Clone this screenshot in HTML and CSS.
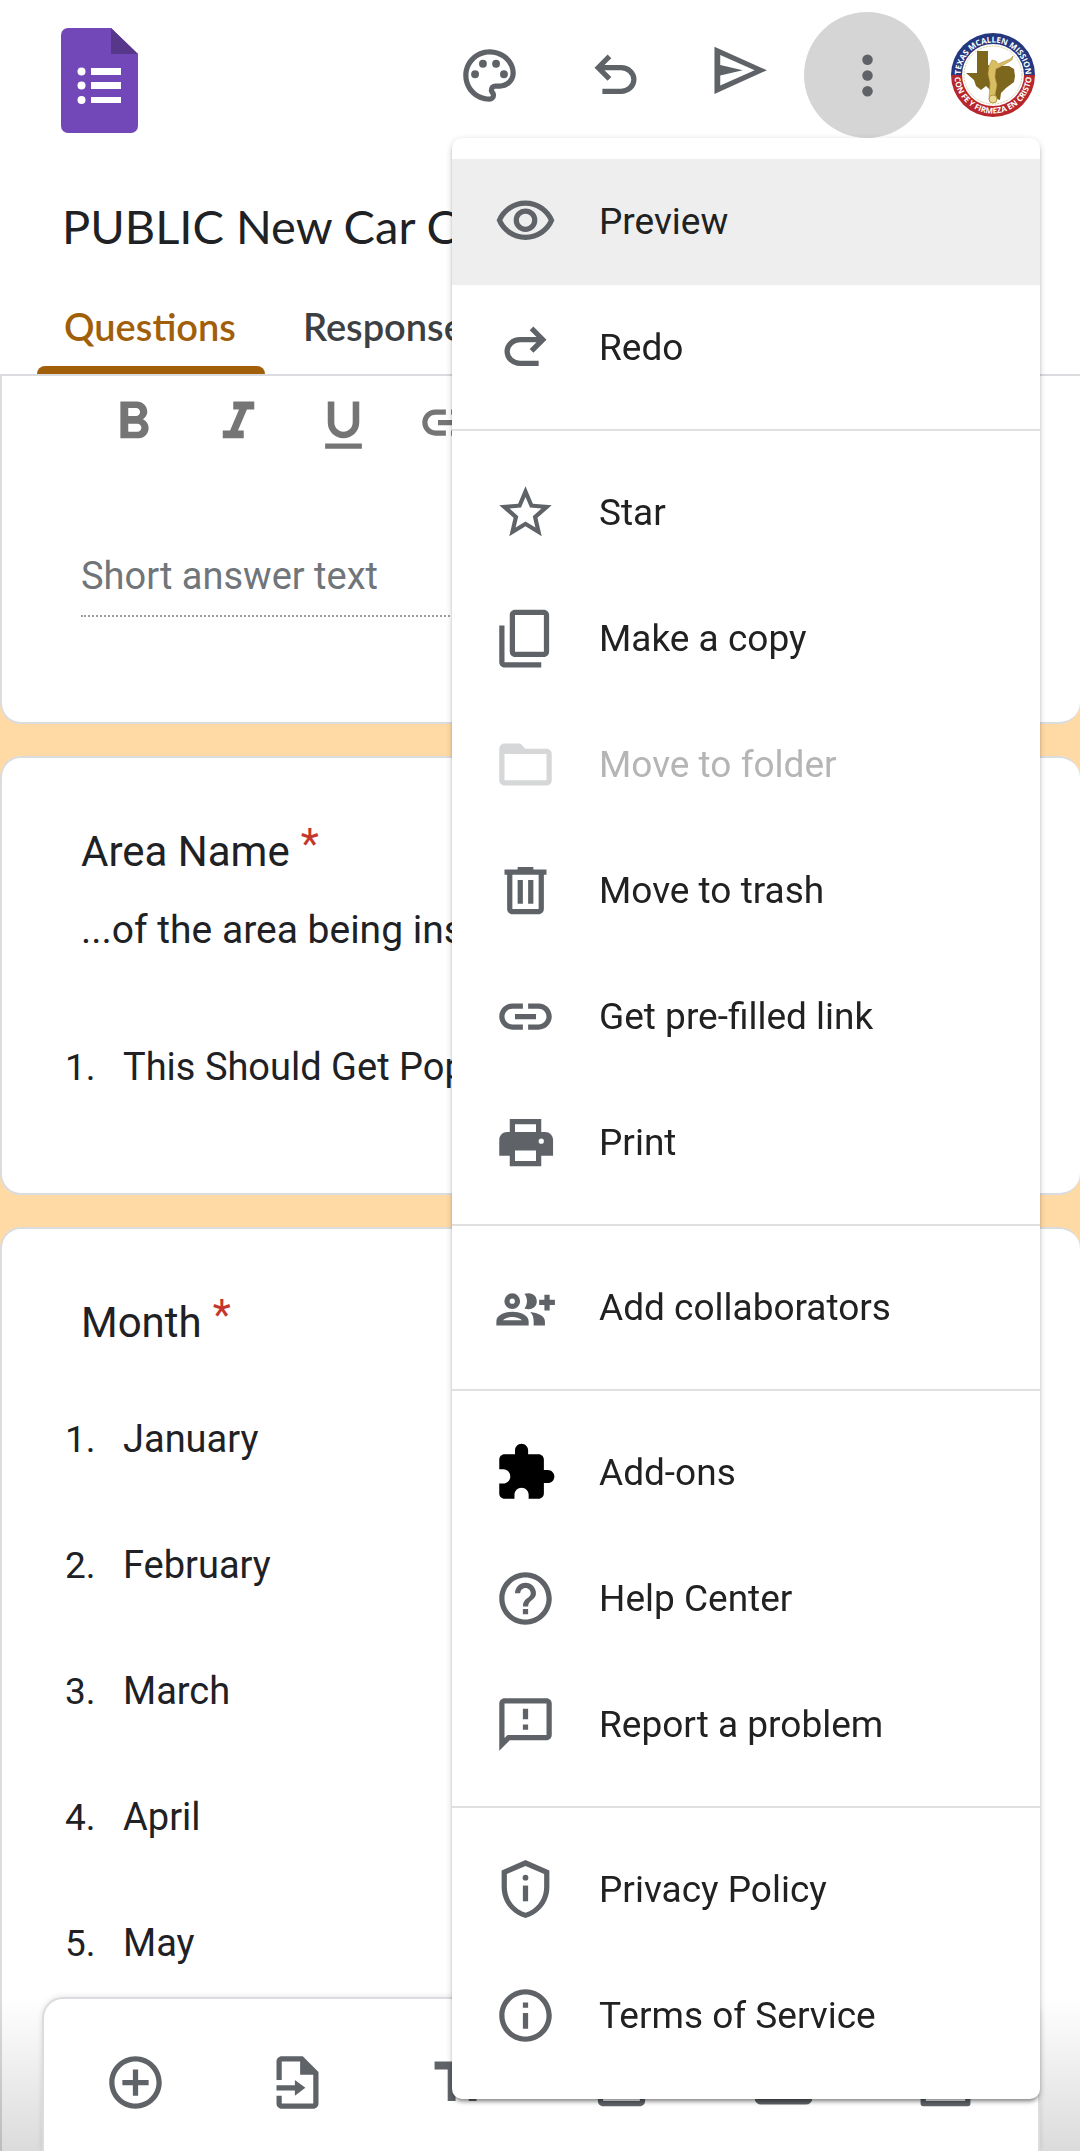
FILE: index.html
```html
<!DOCTYPE html>
<html lang="en">
<head>
<meta charset="utf-8">
<meta name="viewport" content="width=device-width, initial-scale=1">
<title>PUBLIC New Car C</title>
<link rel="stylesheet" href="styles.css">
</head>
<body>
<div class="app">
  <header class="header">
    <div class="appbar">
      <a class="logo" href="#" aria-label="Forms home">
        <svg viewBox="0 0 77 105" width="77" height="105"><path fill="#7248b9" d="M7 0h43l27 26v72a7 7 0 0 1-7 7H7a7 7 0 0 1-7-7V7a7 7 0 0 1 7-7z"/><path fill="#563789" d="M50 0v26h27z"/><g fill="#fff"><circle cx="20.500" cy="43.500" r="4"/><circle cx="20.500" cy="57.500" r="4"/><circle cx="20.500" cy="72" r="4"/><path d="M30 40h30v7H30zM30 54h30v7H30zM30 69h30v6H30z"/></g></svg>
      </a>
      <div class="actions">
        <button class="icon-button" type="button" aria-label="Customize theme"><svg class="icon" viewBox="0 0 24 24"><path d="M12 22C6.490 22 2 17.510 2 12S6.490 2 12 2s10 4.040 10 9c0 3.310-2.690 6-6 6h-1.770c-.28 0-.5.22-.5.5 0 .12.05.23.13.33.41.47.64 1.060.64 1.670A2.500 2.500 0 0 1 12 22zm0-18c-4.410 0-8 3.590-8 8s3.590 8 8 8c.28 0 .5-.22.5-.5a.54.54 0 0 0-.14-.35c-.41-.46-.63-1.050-.63-1.650a2.500 2.500 0 0 1 2.500-2.500H16c2.210 0 4-1.790 4-4 0-3.860-3.590-7-8-7z"/><circle cx="6.500" cy="11.500" r="1.500"/><circle cx="9.500" cy="7.500" r="1.500"/><circle cx="14.500" cy="7.500" r="1.500"/><circle cx="17.500" cy="11.500" r="1.500"/></svg></button>
        <button class="icon-button" type="button" aria-label="Undo"><svg class="icon" viewBox="0 0 24 24"><path d="M7 19v-2h7.100q1.575 0 2.737-1T18 13.500 16.837 11 14.100 10H7.800l2.600 2.600L9 14 4 9l5-5 1.400 1.400L7.800 8h6.300q2.425 0 4.163 1.575T20 13.500t-1.737 3.925T14.100 19z"/></svg></button>
        <button class="icon-button" type="button" aria-label="Send"><svg class="icon" viewBox="0 0 24 24"><path fill-rule="evenodd" d="M1.700 1v18l20-9zM3.900 4.200 17 10 3.900 15.800V12L12.500 10 3.900 8z"/></svg></button>
        <button class="icon-button icon-button-active" type="button" aria-label="More" aria-expanded="true"><svg class="icon" viewBox="0 0 24 24"><circle cx="12" cy="6" r="2"/><circle cx="12" cy="12" r="2"/><circle cx="12" cy="18" r="2"/></svg></button>
        <button class="avatar" type="button" aria-label="Account">
          <svg viewBox="0 0 84 84" width="84" height="84">
            <defs><path id="arc-top" d="M9.500 42a32.500 32.500 0 0 1 65 0"/><path id="arc-bottom" d="M3.500 42a38.500 38.500 0 0 0 77 0"/></defs>
            <path fill="#25387f" d="M0 42a42 42 0 0 1 84 0z"/><path fill="#b7262b" d="M0 42a42 42 0 0 0 84 0z"/>
            <circle cx="42" cy="42" r="31" fill="#fff"/><circle cx="42" cy="42" r="29" fill="none" stroke="#d9cf9a" stroke-width="1" stroke-dasharray="2 1"/>
            <path fill="#7d671d" d="M26 18h11v14l6 2 7-1 8 0 5 3 1 7-1 6-8 6-5 5-1 7-6-2-4-8-4-4-5 4-5-4-2-6-8-7h11z"/>
            <path fill="#d8bd63" stroke="#a8872f" stroke-width=".5" d="M41 27l4 1 2 3 12-5 3-3-1 4-12 7-4 2-1 8 2 8-2 11h-3l-1 3h-2l1-16-2-9 1-8z"/><circle cx="42" cy="66" r="4" fill="#ead995" stroke="#b3943c"/>
            <text class="seal-text"><textPath href="#arc-top" startOffset="50%">TEXAS MCALLEN MISSION</textPath></text>
            <text class="seal-text"><textPath href="#arc-bottom" startOffset="50%">CON FE Y FIRMEZA EN CRISTO</textPath></text>
          </svg>
        </button>
      </div>
    </div>
    <h1 class="title">PUBLIC New Car C</h1>
    <nav class="tabs">
      <a class="tab tab-active" href="#questions">Questions</a>
      <a class="tab" href="#responses">Responses</a>
    </nav>

    <div class="menu" role="menu">
      <button class="menu-item menu-item-focus" type="button" role="menuitem"><svg class="icon" viewBox="0 0 24 24"><path d="M12 6c3.790 0 7.170 2.130 8.820 5.500C19.170 14.870 15.790 17 12 17s-7.170-2.130-8.820-5.500C4.830 8.130 8.210 6 12 6m0-2C7 4 2.730 7.110 1 11.500 2.730 15.890 7 19 12 19s9.270-3.110 11-7.500C21.270 7.110 17 4 12 4z"/><circle cx="12" cy="11.500" r="3.500" fill="none" stroke="currentColor" stroke-width="2"/></svg>Preview</button>
      <button class="menu-item" type="button" role="menuitem"><svg class="icon" viewBox="0 0 24 24"><path transform="matrix(-1 0 0 1 24 0)" d="M7 19v-2h7.100q1.575 0 2.737-1T18 13.500 16.837 11 14.100 10H7.800l2.600 2.600L9 14 4 9l5-5 1.400 1.400L7.800 8h6.300q2.425 0 4.163 1.575T20 13.500t-1.737 3.925T14.100 19z"/></svg>Redo</button>
      <hr class="menu-divider">
      <button class="menu-item" type="button" role="menuitem"><svg class="icon" viewBox="0 0 24 24"><path d="M22 9.240l-7.190-.62L12 2 9.190 8.630 2 9.240l5.460 4.730L5.820 21 12 17.270 18.180 21l-1.630-7.030L22 9.240zM12 15.400l-3.760 2.270 1-4.280-3.320-2.880 4.380-.38L12 6.100l1.710 4.040 4.380.38-3.320 2.880 1 4.280L12 15.400z"/></svg>Star</button>
      <button class="menu-item" type="button" role="menuitem"><svg class="icon" viewBox="0 0 24 24"><path d="M19 1H8c-1.100 0-2 .9-2 2v14c0 1.100.9 2 2 2h11c1.100 0 2-.9 2-2V3c0-1.100-.9-2-2-2zm0 16H8V3h11zM4 7H2v14c0 1.100.9 2 2 2h14v-2H4z"/></svg>Make a copy</button>
      <button class="menu-item" type="button" role="menuitem" disabled><svg class="icon" viewBox="0 0 24 24"><path d="M20 6h-8l-2-2H4c-1.100 0-1.990.9-1.990 2L2 18c0 1.100.9 2 2 2h16c1.100 0 2-.9 2-2V8c0-1.100-.9-2-2-2zm0 12H4V8h16v10z"/></svg>Move to folder</button>
      <button class="menu-item" type="button" role="menuitem"><svg class="icon" viewBox="0 0 24 24"><path d="M15 4V3H9v1H4v2h1v13c0 1.100.9 2 2 2h10c1.100 0 2-.9 2-2V6h1V4h-5zm2 15H7V6h10v13zM9 8h2v9H9zm4 0h2v9h-2z"/></svg>Move to trash</button>
      <button class="menu-item" type="button" role="menuitem"><svg class="icon" viewBox="0 0 24 24"><path d="M17 7h-4v2h4c1.650 0 3 1.350 3 3s-1.350 3-3 3h-4v2h4c2.760 0 5-2.240 5-5s-2.240-5-5-5zm-6 8H7c-1.650 0-3-1.350-3-3s1.350-3 3-3h4V7H7c-2.760 0-5 2.240-5 5s2.240 5 5 5h4v-2zm-3-4h8v2H8z"/></svg>Get pre-filled link</button>
      <button class="menu-item" type="button" role="menuitem"><svg class="icon" viewBox="0 0 24 24"><path fill-rule="evenodd" d="M19.500 8H18V3H6v5H5c-1.660 0-3 1.340-3 3v6h4v4h12v-4h4.500v-6c0-1.660-1.340-3-3-3zM8 5h8v3H8V5zm8 14H8v-4h8v4zm2-8.500a1 1 0 1 1 0 2 1 1 0 0 1 0-2z"/></svg>Print</button>
      <hr class="menu-divider">
      <button class="menu-item" type="button" role="menuitem"><svg class="icon" viewBox="0 0 24 24"><circle cx="6.950" cy="9.600" r="2" fill="none" stroke="currentColor" stroke-width="2"/><path fill-rule="evenodd" d="M.9 18.900v-1.700c0-2.400 3.500-3.600 6.100-3.600s6.200 1.200 6.200 3.600v1.700zM3.400 16.900h7.300c-.7-.7-2.200-1.300-3.700-1.300s-3 .6-3.600 1.300zM11.600 6.800c3-.9 4.700.8 4.700 2.800s-1.700 3.700-4.700 2.800c1.300-1.600 1.300-4 0-5.600zM13.800 13.700c3 .3 5.600 1.500 5.600 3.600v1.600h-4.300v-1.700c0-1.500-.4-2.600-1.300-3.500zM19.200 7.100h2V9h2v2h-2v2.100h-2V11h-2V9h2z"/></svg>Add collaborators</button>
      <hr class="menu-divider">
      <button class="menu-item" type="button" role="menuitem"><svg class="icon icon-black" viewBox="0 0 24 24"><path d="M20.500 11H19V7c0-1.100-.9-2-2-2h-4V3.500C13 2.120 11.880 1 10.500 1S8 2.120 8 3.500V5H4c-1.100 0-1.990.9-1.990 2v3.800H3.500c1.490 0 2.700 1.210 2.700 2.700s-1.210 2.700-2.700 2.700H2V20c0 1.100.9 2 2 2h3.800v-1.500c0-1.490 1.210-2.700 2.700-2.700 1.490 0 2.700 1.210 2.700 2.700V22H17c1.100 0 2-.9 2-2v-4h1.500c1.380 0 2.500-1.120 2.500-2.500S21.880 11 20.500 11z"/></svg>Add-ons</button>
      <button class="menu-item" type="button" role="menuitem"><svg class="icon" viewBox="0 0 24 24"><path d="M11 18h2v-2h-2v2zm1-16C6.480 2 2 6.480 2 12s4.480 10 10 10 10-4.480 10-10S17.520 2 12 2zm0 18c-4.410 0-8-3.590-8-8s3.590-8 8-8 8 3.590 8 8-3.590 8-8 8zm0-14c-2.210 0-4 1.790-4 4h2c0-1.100.9-2 2-2s2 .9 2 2c0 2-3 1.750-3 5h2c0-2.250 3-2.500 3-5 0-2.210-1.790-4-4-4z"/></svg>Help Center</button>
      <button class="menu-item" type="button" role="menuitem"><svg class="icon" viewBox="0 0 24 24"><path d="M20 2H4c-1.100 0-1.990.9-1.990 2L2 22l4-4h14c1.100 0 2-.9 2-2V4c0-1.100-.9-2-2-2zm0 14H5.170l-.59.59-.58.58V4h16v12zm-9-4h2v2h-2zm0-6h2v4h-2z"/></svg>Report a problem</button>
      <hr class="menu-divider">
      <button class="menu-item" type="button" role="menuitem"><svg class="icon" viewBox="0 0 24 24"><path fill-rule="evenodd" d="M12 .8 2.900 4.800V11c0 5.600 3.700 10.200 9.100 11.900 5.400-1.700 9.100-6.300 9.100-11.900V4.800zm0 2.200 7.100 3.100V11c0 4.600-2.800 8.300-7.100 9.900-4.300-1.600-7.100-5.300-7.100-9.900V6.100z"/><circle cx="12" cy="7.500" r="1.100"/><path d="M11 10.500h2v6h-2z"/></svg>Privacy Policy</button>
      <button class="menu-item" type="button" role="menuitem"><svg class="icon" viewBox="0 0 24 24"><path d="M11 7h2v2h-2zm0 4h2v6h-2zm1-9C6.480 2 2 6.480 2 12s4.480 10 10 10 10-4.480 10-10S17.520 2 12 2zm0 18c-4.410 0-8-3.590-8-8s3.590-8 8-8 8 3.590 8 8-3.590 8-8 8z"/></svg>Terms of Service</button>
    </div>
  </header>

  <main class="content">
    <section class="card card-first">
      <div class="format-bar">
        <button class="format-button" type="button" aria-label="Bold"><svg class="icon" viewBox="0 0 24 24"><path d="M15.600 10.790c.97-.67 1.650-1.770 1.650-2.790 0-2.260-1.750-4-4-4H7v14h7.040c2.090 0 3.710-1.700 3.710-3.790 0-1.520-.86-2.820-2.150-3.420zM10 6.500h3c.83 0 1.500.67 1.500 1.500s-.67 1.500-1.500 1.500h-3v-3zm3.500 9H10v-3h3.500c.83 0 1.500.67 1.500 1.500s-.67 1.500-1.500 1.500z"/></svg></button>
        <button class="format-button" type="button" aria-label="Italic"><svg class="icon" viewBox="0 0 24 24"><path d="M10 4v3h2.210l-3.420 8H6v3h8v-3h-2.210l3.420-8H18V4z"/></svg></button>
        <button class="format-button" type="button" aria-label="Underline"><svg class="icon" viewBox="0 0 24 24"><path d="M12 18c3.310 0 6-2.690 6-6V4h-2.500v8c0 1.930-1.570 3.500-3.500 3.500S8.500 13.930 8.500 12V4H6v8c0 3.310 2.690 6 6 6zm-7 2v2h14v-2H5z"/></svg></button>
        <button class="format-button" type="button" aria-label="Insert link"><svg class="icon" viewBox="0 0 24 24"><path d="M17 7h-4v2h4c1.650 0 3 1.350 3 3s-1.350 3-3 3h-4v2h4c2.760 0 5-2.240 5-5s-2.240-5-5-5zm-6 8H7c-1.650 0-3-1.350-3-3s1.350-3 3-3h4V7H7c-2.760 0-5 2.240-5 5s2.240 5 5 5h4v-2zm-3-4h8v2H8z"/></svg></button>
      </div>
      <input class="answer" type="text" placeholder="Short answer text" aria-label="Short answer text">
    </section>

    <section class="card">
      <h2 class="question">Area Name<span class="required">*</span></h2>
      <p class="description">...of the area being ins</p>
      <ol class="options">
        <li class="option"><span class="number">1.</span>This Should Get Pop</li>
      </ol>
    </section>

    <section class="card card-last">
      <h2 class="question">Month<span class="required">*</span></h2>
      <ol class="options options-month">
        <li class="option"><span class="number">1.</span>January</li>
        <li class="option"><span class="number">2.</span>February</li>
        <li class="option"><span class="number">3.</span>March</li>
        <li class="option"><span class="number">4.</span>April</li>
        <li class="option"><span class="number">5.</span>May</li>
      </ol>
    </section>
  </main>

  <footer class="dock">
    <div class="toolbar">
      <button class="tool" type="button" aria-label="Add question"><svg class="icon" viewBox="0 0 24 24"><path d="M13 7h-2v4H7v2h4v4h2v-4h4v-2h-4V7zm-1-5C6.480 2 2 6.480 2 12s4.480 10 10 10 10-4.480 10-10S17.520 2 12 2zm0 18c-4.410 0-8-3.590-8-8s3.590-8 8-8 8 3.590 8 8-3.590 8-8 8z"/></svg></button>
      <button class="tool" type="button" aria-label="Import questions"><svg class="icon" viewBox="0 0 24 24"><path d="M14 2H6c-1.100 0-2 .9-2 2v7h2V4h7v5h5v11H6v-3H4v3c0 1.100.9 2 2 2h12c1.100 0 2-.9 2-2V8zM4 13v2h7v2l4-3-4-3v2z"/></svg></button>
      <button class="tool" type="button" aria-label="Add title and description"><svg class="icon" viewBox="0 0 24 24"><path d="M2.500 4v3h5v12h3V7h5V4h-13zm19 5h-9v3h3v7h3v-7h3V9z"/></svg></button>
      <button class="tool" type="button" aria-label="Add image"><svg class="icon" viewBox="0 0 24 24"><path d="M19 5v14H5V5h14m0-2H5c-1.100 0-2 .9-2 2v14c0 1.100.9 2 2 2h14c1.100 0 2-.9 2-2V5c0-1.100-.9-2-2-2z"/></svg></button>
      <button class="tool" type="button" aria-label="Add video"><svg class="icon" viewBox="0 0 24 24"><path fill-rule="evenodd" d="M3.500 3.700h17A2.500 2.500 0 0 1 23 6.200v11.700a2.500 2.500 0 0 1-2.500 2.500h-17A2.500 2.500 0 0 1 1 17.900V6.200a2.500 2.500 0 0 1 2.500-2.500zM10 8v8l6-4z"/></svg></button>
      <button class="tool" type="button" aria-label="Add section"><svg class="icon" viewBox="0 0 24 24"><path fill-rule="evenodd" d="M3.500 3h17a1 1 0 0 1 1 1v6a1 1 0 0 1-1 1h-17a1 1 0 0 1-1-1V4a1 1 0 0 1 1-1zm1 2v4h15V5zm-1 8h17a1 1 0 0 1 1 1v6a1 1 0 0 1-1 1h-17a1 1 0 0 1-1-1v-6a1 1 0 0 1 1-1zm1 2v4h15v-4z"/></svg></button>
    </div>
  </footer>
</div>
</body>
</html>
```
FILE: styles.css
```css
* {
  box-sizing: border-box;
}

body {
  margin: 0;
  background: #fff;
  color: #202124;
  font-family: Roboto, "Liberation Sans", sans-serif;
}

button {
  padding: 0;
  border: 0;
  background: none;
  color: inherit;
  font: inherit;
}

.app {
  display: flex;
  flex-direction: column;
  min-height: 100vh;
}

.icon {
  display: block;
  flex: none;
  width: 63px;
  height: 63px;
  color: #5f6368;
  fill: currentColor;
}

.icon-black {
  color: #000;
}

/* Header */
.header {
  position: relative;
  z-index: 2;
  background: #fff;
  border-bottom: 2px solid #dadce0;
}

.appbar {
  display: flex;
  align-items: center;
  justify-content: space-between;
  padding: 12px 45px 12px 61px;
}

.logo {
  display: block;
  padding-top: 11px;
}

.logo svg,
.avatar svg {
  display: block;
}

.actions {
  display: flex;
  align-items: center;
}

.icon-button {
  display: grid;
  place-items: center;
  width: 126px;
  height: 126px;
  border-radius: 50%;
}

.icon-button-active {
  background: #d5d5d5;
}

.avatar {
  margin-left: 21px;
}

.seal-text {
  fill: #fff;
  font-family: "Open Sans", sans-serif;
  font-size: 8px;
  font-weight: 700;
  text-anchor: middle;
}

.title {
  margin: 46px 62px 24px;
  font-family: Lato, sans-serif;
  font-size: 47px;
  font-weight: 400;
  line-height: 60px;
  white-space: nowrap;
}

.tabs {
  display: flex;
  gap: 11px;
  padding-left: 37px;
}

.tab {
  position: relative;
  min-width: 228px;
  padding: 24px 27px 26px;
  color: #3c4043;
  font-family: Lato, sans-serif;
  font-size: 38px;
  font-weight: 600;
  line-height: 44px;
  text-decoration: none;
}

.tab-active {
  color: #a15f09;
}

.tab-active::after {
  content: "";
  position: absolute;
  right: 0;
  bottom: 0;
  left: 0;
  height: 8px;
  border-radius: 8px 8px 0 0;
  background: #a15f09;
}

/* Overflow menu */
.menu {
  position: absolute;
  top: 138px;
  right: 40px;
  z-index: 3;
  width: 588px;
  padding: 21px 0 20px;
  border-radius: 10px;
  background: #fff;
  box-shadow: 0 2px 6px rgba(0, 0, 0, 0.2), 0 4px 4px -2px rgba(0, 0, 0, 0.4);
}

.menu-item {
  display: flex;
  align-items: center;
  gap: 42px;
  width: 100%;
  height: 126px;
  padding: 0 42px 2px;
  color: #212121;
  font-size: 37px;
  text-align: left;
  white-space: nowrap;
}

.menu-item-focus {
  background: #eee;
}

.menu-item:disabled {
  color: #b5b5b5;
}

.menu-item:disabled .icon {
  color: #d6d7d8;
}

.menu-divider {
  height: 2px;
  margin: 18px 0 19px;
  border: 0;
  background: #e0e0e0;
}

/* Form cards */
.content {
  display: flex;
  flex: 1;
  flex-direction: column;
  gap: 32px;
  background: #ffdaa5;
}

.card {
  padding: 64px 79px 63px;
  border: 2px solid #dadce0;
  border-right: 0;
  border-radius: 21px;
  background: #fff;
}

.card-first {
  padding-top: 15px;
  padding-bottom: 105px;
  border-top: 0;
  border-radius: 0 0 21px 21px;
}

.card-last {
  flex: 1;
  border-bottom: 0;
  border-radius: 21px 21px 0 0;
}

.format-bar {
  display: flex;
}

.format-button {
  display: grid;
  place-items: center;
  width: 105px;
}

.format-button .icon {
  color: #757575;
}

.answer {
  display: block;
  width: 100%;
  height: 78px;
  margin-top: 85px;
  padding: 0 0 2px;
  border: 0;
  border-bottom: 2px dotted #9e9e9e;
  background: none;
  font: inherit;
  font-size: 38px;
}

.answer::placeholder {
  color: #70757a;
}

.question {
  display: flex;
  align-items: flex-start;
  gap: 11px;
  margin: 0;
  font-size: 42px;
  font-weight: 400;
  line-height: 60px;
}

.required {
  color: #c5372c;
  line-height: 44px;
}

.description {
  margin: 22px 0 48px;
  font-size: 39px;
  line-height: 52px;
}

.options {
  margin: 0 0 0 -16px;
  padding: 0;
  list-style: none;
}

.options-month {
  margin-top: 23px;
}

.option {
  display: flex;
  align-items: center;
  height: 126px;
  font-size: 38px;
}

.number {
  flex: none;
  width: 58px;
  font-size: 37px;
}

/* Bottom tool dock */
.dock {
  position: fixed;
  right: 0;
  bottom: 0;
  left: 0;
  z-index: 1;
  padding: 0 40px 0 42px;
  background: linear-gradient(rgba(0, 0, 0, 0), rgba(0, 0, 0, 0.14));
}

.toolbar {
  display: flex;
  padding: 52px 12px 37px 10px;
  border: 2px solid #dadce0;
  border-bottom: 0;
  border-radius: 21px 21px 0 0;
  background: #fff;
  box-shadow: 0 0 6px rgba(0, 0, 0, 0.12);
}

.tool {
  display: grid;
  flex: 1;
  place-items: center;
}
```
